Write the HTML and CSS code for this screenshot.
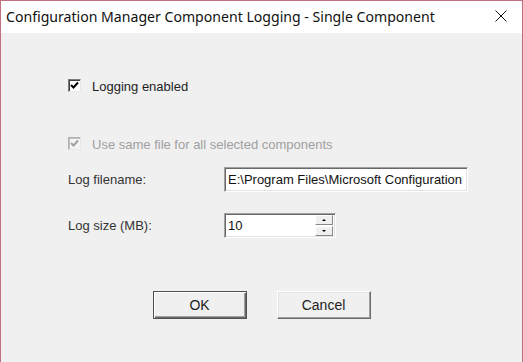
FILE: index.html
```html
<!DOCTYPE html>
<html lang="en">
<head>
    <meta charset="UTF-8">
    <title>Configuration Manager Component Logging - Single Component</title>
    <link rel="stylesheet" href="styles.css">
</head>
<body>
    <div class="window">
        <div class="titlebar">
            <span class="title">Configuration Manager Component Logging - Single Component</span>
            <svg class="close" width="12" height="12" viewBox="0 0 12 12">
                <path d="M0.5 0.5 L11.5 11.5 M11.5 0.5 L0.5 11.5" stroke="#111" stroke-width="1" fill="none"/>
            </svg>
        </div>
        <div class="content">
            <div class="check-row">
                <span class="checkbox">
                    <svg width="9" height="9" viewBox="0 0 9 9"><path d="M1 4 L3.5 6.5 L8 1.5" stroke="#000" stroke-width="2" fill="none"/></svg>
                </span>
                <span>Logging enabled</span>
            </div>
            <div class="check-row disabled">
                <span class="checkbox">
                    <svg width="9" height="9" viewBox="0 0 9 9"><path d="M1 4 L3.5 6.5 L8 1.5" stroke="#a0a0a0" stroke-width="2" fill="none"/></svg>
                </span>
                <span>Use same file for all selected components</span>
            </div>
            <div class="field-row first">
                <label>Log filename:</label>
                <div class="textbox wide">E:\Program Files\Microsoft Configuration</div>
            </div>
            <div class="field-row">
                <label>Log size (MB):</label>
                <div class="textbox narrow">
                    <span>10</span>
                    <div class="spinner">
                        <span class="spin up"></span>
                        <span class="spin down"></span>
                    </div>
                </div>
            </div>
            <div class="buttons">
                <button class="default">OK</button>
                <button>Cancel</button>
            </div>
        </div>
    </div>
</body>
</html>
```

FILE: styles.css
```css
body {
    margin: 0;
    padding: 0;
    background-color: #f0f0f0;
    font-family: "Liberation Sans", Arial, sans-serif;
    font-size: 13px;
    color: #1e1e1e;
}
.window {
    width: 521px;
    height: 362px;
    border: 1px solid #c07080;
    border-bottom: none;
    background-color: #f0f0f0;
    overflow: hidden;
}
.titlebar {
    height: 32px;
    background-color: #fff;
    display: flex;
    align-items: center;
    padding-left: 5px;
    padding-right: 15px;
    justify-content: space-between;
}
.title {
    font-family: "Noto Sans", "Open Sans", sans-serif;
    font-size: 14.1px;
    color: #111;
    margin-top: -1px;
}
.close {
    margin-top: -2px;
}
.content {
    padding: 46px 0 0 67px;
}
.check-row {
    display: flex;
    align-items: center;
    height: 14px;
    gap: 11px;
}
.check-row.disabled {
    margin-top: 44px;
    color: #a0a0a0;
}
.checkbox {
    width: 11px;
    height: 11px;
    background-color: #fff;
    border: 1px solid;
    border-color: #7a7a7a #e8e8e8 #e8e8e8 #7a7a7a;
    box-shadow: inset 1px 1px 0 #404040;
    display: flex;
    align-items: center;
    justify-content: center;
    margin-top: -1px;
}
.disabled .checkbox {
    background-color: #f4f4f4;
    border-color: #b0b0b0 #e8e8e8 #e8e8e8 #b0b0b0;
    box-shadow: inset 1px 1px 0 #c0c0c0;
}
.field-row {
    display: flex;
    align-items: center;
    margin-top: 21px;
}
.field-row.first {
    margin-top: 16px;
}
.field-row label {
    width: 156px;
    color: #333;
}
.textbox {
    background-color: #fff;
    border: 1px solid;
    border-color: #a0a0a0 #fff #fff #a0a0a0;
    box-shadow: inset 1px 1px 0 #696969, inset -1px -1px 0 #e3e3e3;
    display: flex;
    align-items: center;
    padding-left: 3px;
    box-sizing: border-box;
    height: 25px;
    color: #111;
    white-space: nowrap;
}
.textbox.wide {
    width: 244px;
}
.textbox.narrow {
    width: 112px;
    justify-content: space-between;
    padding-right: 2px;
}
.spinner {
    display: flex;
    flex-direction: column;
    gap: 1px;
}
.spin {
    width: 16px;
    height: 8px;
    background-color: #f0f0f0;
    border: 1px solid;
    border-color: #fff #888 #888 #fff;
    position: relative;
}
.spin::after {
    content: "";
    position: absolute;
    left: 6px;
    border-left: 2px solid transparent;
    border-right: 2px solid transparent;
}
.spin.up::after {
    top: 3px;
    border-bottom: 2px solid #000;
}
.spin.down::after {
    top: 3px;
    border-top: 2px solid #000;
}
.buttons {
    display: flex;
    justify-content: center;
    gap: 30px;
    margin-top: 53px;
    margin-left: -67px;
}
button {
    width: 94px;
    height: 28px;
    font-family: "Liberation Sans", Arial, sans-serif;
    font-size: 14px;
    color: #1e1e1e;
    background-color: #f0f0f0;
    border: 1px solid;
    border-color: #fff #6a6a6a #6a6a6a #fff;
    box-shadow: inset -1px -1px 0 #a0a0a0, inset 1px 1px 0 #e3e3e3;
    padding: 0;
}
button.default {
    border: 1px solid #505050;
    box-shadow: inset 1px 1px 0 #fff, inset -1px -1px 0 #6a6a6a, inset -2px -2px 0 #a0a0a0;
}
```
